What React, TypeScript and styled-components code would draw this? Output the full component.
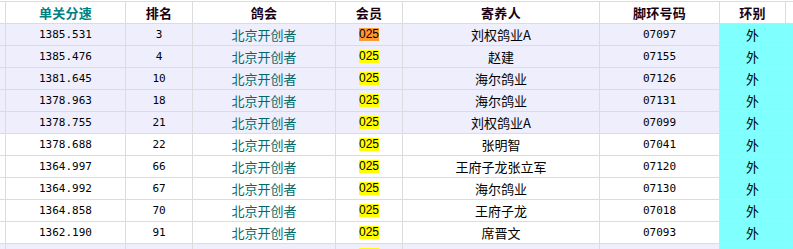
import React from "react";
import styled, { createGlobalStyle } from "styled-components";

const GlobalStyle = createGlobalStyle`
  body {
    margin: 0;
    background: #ffffff;
    overflow: hidden;
  }
`;

interface Entry {
  speed: string;
  rank: string;
  name: string;
  ring: string;
  shade?: boolean;
  hot?: boolean;
}

const entries: Entry[] = [
  { speed: "1385.531", rank: "3", name: "刘权鸽业A", ring: "07097", shade: true, hot: true },
  { speed: "1385.476", rank: "4", name: "赵建", ring: "07155", shade: true },
  { speed: "1381.645", rank: "10", name: "海尔鸽业", ring: "07126", shade: true },
  { speed: "1378.963", rank: "18", name: "海尔鸽业", ring: "07131", shade: true },
  { speed: "1378.755", rank: "21", name: "刘权鸽业A", ring: "07099", shade: true },
  { speed: "1378.688", rank: "22", name: "张明智", ring: "07041" },
  { speed: "1364.997", rank: "66", name: "王府子龙张立军", ring: "07120" },
  { speed: "1364.992", rank: "67", name: "海尔鸽业", ring: "07130" },
  { speed: "1364.858", rank: "70", name: "王府子龙", ring: "07018" },
  { speed: "1362.190", rank: "91", name: "席晋文", ring: "07093" },
  { speed: "1361.874", rank: "95", name: "海尔鸽业", ring: "07133", shade: true },
];

const App = () => {
  return (
    <>
      <GlobalStyle />
      <Sheet>
        <HeaderRow>
          <Cell />
          <HeadCell $teal>单关分速</HeadCell>
          <HeadCell>排名</HeadCell>
          <HeadCell>鸽会</HeadCell>
          <HeadCell>会员</HeadCell>
          <HeadCell>寄养人</HeadCell>
          <HeadCell>脚环号码</HeadCell>
          <HeadCell>环别</HeadCell>
          <Cell />
        </HeaderRow>
        {entries.map((e) => (
          <Row key={e.ring} $shade={e.shade}>
            <Cell />
            <Cell>
              <Num>{e.speed}</Num>
            </Cell>
            <Cell>
              <Num>{e.rank}</Num>
            </Cell>
            <Cell>
              <Club>北京开创者</Club>
            </Cell>
            <Cell>
              <Member $hot={e.hot}>025</Member>
            </Cell>
            <Cell>
              <Text>{e.name}</Text>
            </Cell>
            <Cell>
              <Num>{e.ring}</Num>
            </Cell>
            <RingCell>
              <Text>外</Text>
            </RingCell>
            <RingCell />
          </Row>
        ))}
      </Sheet>
    </>
  );
};

export default App;

const Sheet = styled.div`
  margin-top: 1px;
  border-top: 1px solid #dcdcdc;
  width: 893px;
`;

const RowBase = styled.div`
  display: grid;
  grid-template-columns: 6px 120px 67px 143px 67px 197px 120px 66px 107px;
  height: 22px;
  box-sizing: border-box;
  border-bottom: 1px solid #dcdcdc;
`;

const HeaderRow = styled(RowBase)`
  background: #ffffff;
`;

const Row = styled(RowBase)<{ $shade?: boolean }>`
  background: ${(p) => (p.$shade ? "#eeeefc" : "#ffffff")};
`;

const Cell = styled.div`
  box-sizing: border-box;
  border-right: 1px solid #dcdcdc;
  display: flex;
  align-items: center;
  justify-content: center;
  overflow: hidden;
  white-space: nowrap;
`;

const RingCell = styled(Cell)`
  background: #80ffff;
`;

const HeadCell = styled(Cell)<{ $teal?: boolean }>`
  font-family: "Noto Sans CJK SC", sans-serif;
  font-weight: 700;
  font-size: 13px;
  line-height: 16px;
  letter-spacing: 0.3px;
  color: ${(p) => (p.$teal ? "#008080" : "#1a0010")};
`;

const Num = styled.span`
  font-family: "DejaVu Sans Mono", "Liberation Mono", monospace;
  font-size: 11px;
  line-height: 14px;
  color: #000000;
`;

const Text = styled.span`
  font-family: "Noto Sans CJK SC", sans-serif;
  font-size: 13px;
  line-height: 16px;
  color: #000000;
`;

const Club = styled(Text)`
  color: #006a6a;
`;

const Member = styled.span<{ $hot?: boolean }>`
  display: inline-block;
  height: 13px;
  line-height: 13px;
  font-family: "Liberation Sans", Arial, sans-serif;
  font-size: 12px;
  color: #000000;
  background: ${(p) => (p.$hot ? "#ff9933" : "#ffff00")};
`;
